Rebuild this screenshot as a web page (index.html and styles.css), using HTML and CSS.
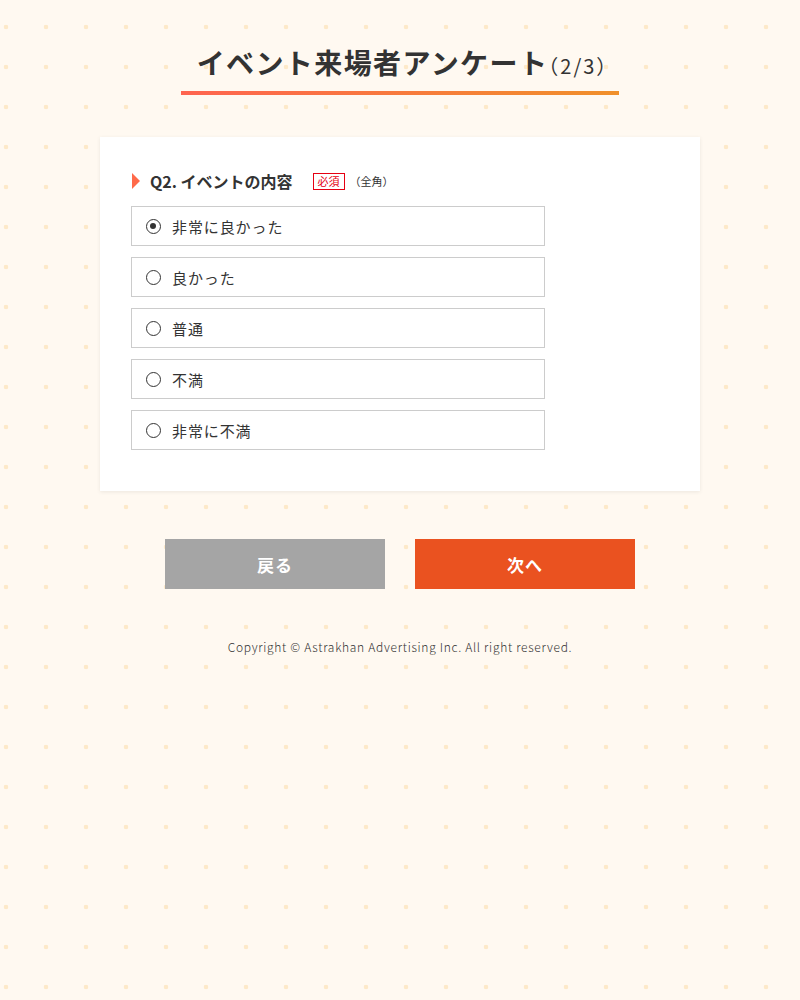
FILE: index.html
```html
<!doctype html>
<html lang="ja">
  <head>
    <meta charset="UTF-8" />
    <meta name="viewport" content="width=device-width, initial-scale=1.0" />
    <title>イベント来場者アンケート</title>
    <link rel="stylesheet" href="styles.css">
  </head>
  <body>
    <div class="page">
      <header class="page-head">
        <h1 class="page-title">イベント来場者アンケート<span class="step">（2/3）</span></h1>
      </header>

      <form class="card">
        <div class="question">
          <span class="question-mark"></span>
          <span class="question-text">Q2. イベントの内容</span>
          <span class="badge">必須</span>
          <span class="note">（全角）</span>
        </div>

        <label class="option">
          <input type="radio" name="q2" value="1" checked />
          <span class="radio"></span>
          <span class="option-text">非常に良かった</span>
        </label>
        <label class="option">
          <input type="radio" name="q2" value="2" />
          <span class="radio"></span>
          <span class="option-text">良かった</span>
        </label>
        <label class="option">
          <input type="radio" name="q2" value="3" />
          <span class="radio"></span>
          <span class="option-text">普通</span>
        </label>
        <label class="option">
          <input type="radio" name="q2" value="4" />
          <span class="radio"></span>
          <span class="option-text">不満</span>
        </label>
        <label class="option">
          <input type="radio" name="q2" value="5" />
          <span class="radio"></span>
          <span class="option-text">非常に不満</span>
        </label>
      </form>

      <div class="actions">
        <button type="button" class="btn btn-back">戻る</button>
        <button type="button" class="btn btn-next">次へ</button>
      </div>

      <footer class="footer">Copyright © Astrakhan Advertising Inc. All right reserved.</footer>
    </div>
  </body>
</html>
```

FILE: styles.css
```css
body {
  margin: 0;
  padding: 0;
  font-family: "Noto Sans CJK JP", "Noto Sans", sans-serif;
  color: #333;
  background-color: #fff9f1;
  background-image: radial-gradient(circle, #fde9c9 2px, transparent 2.6px);
  background-size: 40px 40px;
  background-position: -14px 7px;
  min-height: 1000px;
}

.page {
  width: 600px;
  margin: 0 auto;
  padding-top: 40px;
}

.page-head {
  text-align: center;
}

.page-title {
  display: inline-block;
  margin: 0;
  padding: 0 11px 3px 16px;
  font-size: 28px;
  font-weight: bold;
  line-height: 44px;
  letter-spacing: 1.4px;
  color: #333;
  border-bottom: 4px solid transparent;
  border-image: linear-gradient(to right, #ff6450, #f0902a) 1;
}

.step {
  font-size: 20px;
  font-weight: normal;
  letter-spacing: 2px;
  font-feature-settings: "halt";
}

.card {
  margin-top: 42px;
  background-color: #fff;
  padding: 32px 30px 41px 31px;
  box-shadow: 0 1px 4px rgba(0, 0, 0, 0.08);
}

.question {
  display: flex;
  align-items: center;
  height: 24px;
  margin-bottom: 13px;
}

.question-mark {
  width: 0;
  height: 0;
  margin-left: 1px;
  border-top: 8px solid transparent;
  border-bottom: 8px solid transparent;
  border-left: 8px solid #ff6a4a;
}

.question-text {
  margin-left: 10px;
  font-size: 16px;
  font-weight: bold;
}

.badge {
  margin-left: 20px;
  padding: 0 4px;
  height: 15px;
  line-height: 15px;
  font-size: 11px;
  color: #e60012;
  border: 1px solid #e60012;
}

.note {
  margin-left: 5px;
  font-size: 11px;
}

.option {
  display: flex;
  align-items: center;
  width: 414px;
  height: 40px;
  box-sizing: border-box;
  margin-bottom: 11px;
  padding-left: 14px;
  border: 1px solid #ccc;
  cursor: pointer;
}

.option:last-child {
  margin-bottom: 0;
}

.option input {
  display: none;
}

.radio {
  position: relative;
  width: 15px;
  height: 15px;
  box-sizing: border-box;
  border: 1.5px solid #333;
  border-radius: 50%;
}

.option input:checked + .radio::after {
  content: "";
  position: absolute;
  top: 3px;
  left: 3px;
  width: 6px;
  height: 6px;
  border-radius: 50%;
  background-color: #333;
}

.option-text {
  margin-left: 11px;
  font-size: 15px;
  letter-spacing: 0.9px;
}

.actions {
  display: flex;
  justify-content: center;
  gap: 30px;
  margin-top: 48px;
}

.btn {
  width: 220px;
  height: 50px;
  border: none;
  font-family: inherit;
  font-size: 17px;
  font-weight: bold;
  letter-spacing: 1px;
  color: #fff;
  cursor: pointer;
}

.btn-back {
  background-color: #a5a5a5;
}

.btn-next {
  background-color: #ea5220;
}

.footer {
  margin-top: 49px;
  text-align: center;
  font-size: 12px;
  font-weight: 300;
  letter-spacing: 0.7px;
  color: #333;
}
```
